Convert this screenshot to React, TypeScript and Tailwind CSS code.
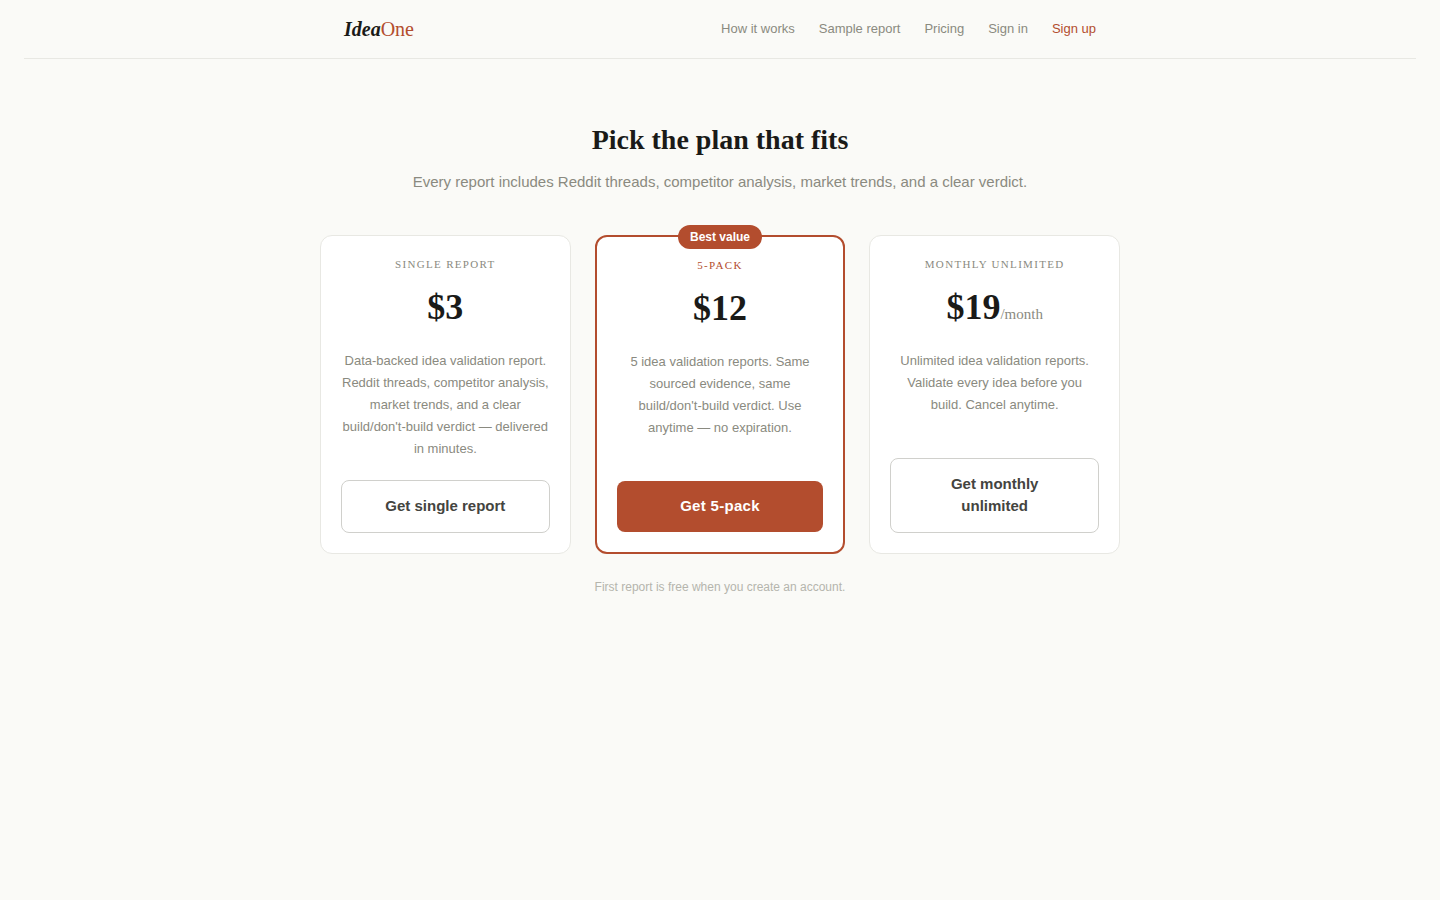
import type { ReactNode } from "react";

const SERIF = "font-['Liberation_Serif',serif]";

type Plan = {
  name: string;
  price: string;
  period?: string;
  text: string;
  action: string;
  badge?: string;
};

const plans: Plan[] = [
  {
    name: "Single report",
    price: "$3",
    text: "Data-backed idea validation report. Reddit threads, competitor analysis, market trends, and a clear build/don't-build verdict — delivered in minutes.",
    action: "Get single report",
  },
  {
    name: "5-Pack",
    price: "$12",
    text: "5 idea validation reports. Same sourced evidence, same build/don't-build verdict. Use anytime — no expiration.",
    action: "Get 5-pack",
    badge: "Best value",
  },
  {
    name: "Monthly unlimited",
    price: "$19",
    period: "/month",
    text: "Unlimited idea validation reports. Validate every idea before you build. Cancel anytime.",
    action: "Get monthly unlimited",
  },
];

function NavLink({ href, active, children }: { href: string; active?: boolean; children: ReactNode }) {
  return (
    <a href={href} className={active ? "text-[#b34d2e]" : "text-[#8a8a80]"}>
      {children}
    </a>
  );
}

function PlanCard({ plan }: { plan: Plan }) {
  const featured = Boolean(plan.badge);
  return (
    <article
      className={`relative flex flex-col rounded-xl bg-white p-5 text-center ${
        featured ? "border-2 border-[#b34d2e]" : "border border-[#e8e8e3]"
      }`}
    >
      {plan.badge && (
        <span className="absolute -top-3 left-1/2 -translate-x-1/2 rounded-full bg-[#b34d2e] px-3 text-xs leading-6 font-semibold whitespace-nowrap text-white">
          {plan.badge}
        </span>
      )}
      <h2
        className={`${SERIF} mb-3 text-[11px] leading-[17px] tracking-[0.12em] uppercase ${
          featured ? "text-[#b34d2e]" : "text-[#8a8a80]"
        }`}
      >
        {plan.name}
      </h2>
      <p className={`${SERIF} mb-5 text-4xl leading-[45px] font-bold text-[#1a1a18]`}>
        {plan.price}
        {plan.period && <span className="text-[15px] leading-none font-normal text-[#8a8a80]">{plan.period}</span>}
      </p>
      <p className="mb-5 text-[13px] leading-[22px] text-[#8a8a80]">{plan.text}</p>
      <button
        type="button"
        className={`mt-auto cursor-pointer rounded-lg px-7 pt-[14px] pb-[15px] text-[15px] leading-[22px] font-semibold ${
          featured ? "bg-[#b34d2e] tracking-[0.02em] text-white" : "border border-[#d0d0cc] bg-white text-[#444440]"
        }`}
      >
        {plan.action}
      </button>
    </article>
  );
}

export default function App() {
  return (
    <div className="min-h-screen bg-[#fafaf7] px-6 font-['Liberation_Sans',sans-serif]">
      <header className="border-b border-[#e8e8e3]">
        <nav className="mx-auto flex h-[58px] max-w-[800px] items-center justify-between px-6">
          <a href="#home" className={`${SERIF} text-xl text-[#b34d2e]`}>
            <span className="font-bold text-[#1a1a18] italic">Idea</span>One
          </a>
          <div className="flex gap-6 text-[13px] leading-[22px]">
            <NavLink href="#how">How it works</NavLink>
            <NavLink href="#sample">Sample report</NavLink>
            <NavLink href="#pricing">Pricing</NavLink>
            <NavLink href="#signin">Sign in</NavLink>
            <NavLink href="#signup" active>
              Sign up
            </NavLink>
          </div>
        </nav>
      </header>
      <main className="mx-auto max-w-[800px] pt-16 text-center">
        <h1 className={`${SERIF} text-[28px] leading-[34px] font-bold text-[#1a1a18]`}>Pick the plan that fits</h1>
        <p className="mt-3 text-[15px] leading-[26px] text-[#8a8a80]">
          Every report includes Reddit threads, competitor analysis, market trends, and a clear verdict.
        </p>
        <section className="mt-10 grid grid-cols-3 gap-6">
          {plans.map((plan) => (
            <PlanCard key={plan.name} plan={plan} />
          ))}
        </section>
        <p className="mt-6 text-xs leading-[18px] text-[#b5b5ad]">First report is free when you create an account.</p>
      </main>
    </div>
  );
}
